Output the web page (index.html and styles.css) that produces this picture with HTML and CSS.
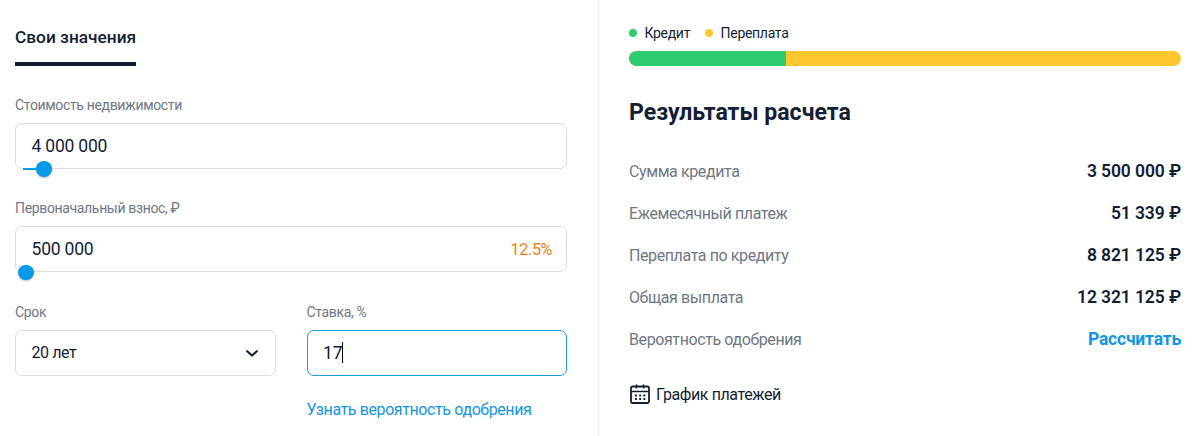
FILE: index.html
```html
<!DOCTYPE html>
<html lang="ru">
<head>
  <meta charset="utf-8">
  <title>Ипотечный калькулятор</title>
  <link rel="stylesheet" href="styles.css">
</head>
<body>
<div class="calculator">
  <div class="params">
    <div class="tabs">
      <a class="tab active">Свои значения</a>
    </div>
    <div class="field">
      <label class="label">Стоимость недвижимости</label>
      <div class="control">
        <span class="value">4 000 000</span>
        <div class="slider">
          <div class="slider-track" style="width: 21px"></div>
          <div class="slider-thumb"></div>
        </div>
      </div>
    </div>
    <div class="field">
      <label class="label">Первоначальный взнос, ₽</label>
      <div class="control">
        <span class="value">500 000</span>
        <span class="percent">12.5%</span>
        <div class="slider">
          <div class="slider-track" style="width: 3px"></div>
          <div class="slider-thumb"></div>
        </div>
      </div>
    </div>
    <div class="row">
      <div class="field">
        <label class="label">Срок</label>
        <div class="control select">
          <span class="value">20 лет</span>
          <svg class="arrow" width="14" height="10" viewBox="0 0 14 10">
            <path d="M2.2 3.2 L7 7.6 L11.8 3.2" fill="none" stroke="#131e35" stroke-width="2.1" stroke-linecap="round" stroke-linejoin="round"/>
          </svg>
        </div>
      </div>
      <div class="field">
        <label class="label">Ставка, %</label>
        <div class="control focused">
          <span class="value">17</span><span class="caret"></span>
        </div>
        <a class="link">Узнать вероятность одобрения</a>
      </div>
    </div>
  </div>
  <div class="results">
    <div class="legend">
      <span class="legend-item"><i class="dot green"></i>Кредит</span>
      <span class="legend-item"><i class="dot yellow"></i>Переплата</span>
    </div>
    <div class="bar">
      <div class="bar-credit" style="width: 28.4%"></div>
    </div>
    <h2 class="title">Результаты расчета</h2>
    <ul class="list">
      <li><span class="name">Сумма кредита</span><b class="sum">3 500 000 ₽</b></li>
      <li><span class="name">Ежемесячный платеж</span><b class="sum">51 339 ₽</b></li>
      <li><span class="name">Переплата по кредиту</span><b class="sum">8 821 125 ₽</b></li>
      <li><span class="name">Общая выплата</span><b class="sum">12 321 125 ₽</b></li>
      <li><span class="name">Вероятность одобрения</span><a class="calc">Рассчитать</a></li>
    </ul>
    <a class="schedule">
      <svg class="calendar" width="20" height="20" viewBox="0 0 20 20">
        <rect x="1" y="2.5" width="18" height="16.5" rx="1.5" fill="none" stroke="#131e35" stroke-width="1.8"/>
        <path d="M1.5 7.5 H18.5 M6.5 0.5 V4.4 M13.5 0.5 V4.4" fill="none" stroke="#131e35" stroke-width="1.6"/>
        <path d="M5 11.5 H15.6 M5 15 H15.6" fill="none" stroke="#131e35" stroke-width="1.8" stroke-dasharray="1.9 2.3"/>
      </svg>
      <span>График платежей</span>
    </a>
  </div>
</div>
</body>
</html>
```
FILE: styles.css
```css
* {
  box-sizing: border-box;
}
body {
  margin: 0;
  background-color: #fff;
  color: #131e35;
  font-family: Roboto, "Liberation Sans", sans-serif;
  font-size: 16px;
  letter-spacing: -0.4px;
}
.calculator {
  display: flex;
  height: 436px;
  overflow: hidden;
}
.params {
  width: 599px;
  padding: 24px 31px 0 15px;
  border-right: 1px solid #ececef;
}
.tabs {
  display: flex;
  height: 42px;
  margin-bottom: 29px;
}
.tab {
  font-size: 17.3px;
  font-weight: 500;
  line-height: 26px;
  letter-spacing: 0;
}
.tab.active {
  border-bottom: 4px solid #131e35;
}
.field {
  flex: 1;
  height: 103.4px;
}
.label {
  display: block;
  height: 28px;
  font-size: 14px;
  line-height: 20px;
  letter-spacing: -0.34px;
  color: #6f7785;
}
.control {
  position: relative;
  display: flex;
  align-items: center;
  height: 46px;
  padding: 0 14px 0 15.5px;
  border: 1px solid #dcdce4;
  border-radius: 7px;
}
.value {
  font-size: 17.5px;
  letter-spacing: -0.2px;
}
.percent {
  margin-left: auto;
  font-size: 16px;
  letter-spacing: -0.3px;
  color: #f0800f;
}
.slider {
  position: absolute;
  left: 7px;
  bottom: -9px;
  display: flex;
  align-items: center;
  height: 16px;
}
.slider-track {
  height: 2px;
  background-color: #069ae8;
}
.slider-thumb {
  width: 15.5px;
  height: 15.5px;
  margin-left: -8px;
  border-radius: 50%;
  background-color: #069ae8;
  box-shadow: 0 1px 2px rgba(0, 0, 0, 0.25);
}
.row {
  display: flex;
  gap: 31px;
}
.select .value {
  font-size: 16px;
  letter-spacing: -0.4px;
}
.arrow {
  margin-left: auto;
  margin-right: 2px;
}
.focused {
  border-color: #1a9fe0;
}
.caret {
  width: 1px;
  height: 21px;
  background-color: #000;
}
.link {
  display: block;
  margin-top: 24px;
  line-height: 20px;
  color: #1496e4;
  white-space: nowrap;
}
.results {
  flex: 1;
  padding: 23px 19px 0 30px;
}
.legend {
  display: flex;
  gap: 15px;
  height: 28px;
  font-size: 14px;
  line-height: 20px;
  letter-spacing: -0.3px;
}
.legend-item {
  display: flex;
  align-items: center;
  height: 20px;
}
.dot {
  width: 8px;
  height: 8px;
  margin-right: 7.5px;
  border-radius: 50%;
}
.green {
  background-color: #2ecc71;
}
.yellow {
  background-color: #ffc72f;
}
.bar {
  height: 15px;
  border-radius: 8px;
  overflow: hidden;
  background-color: #ffc72f;
}
.bar-credit {
  height: 100%;
  background-color: #2ecc71;
}
.title {
  margin: 32px 0 22px;
  font-size: 23.1px;
  font-weight: 700;
  line-height: 30px;
  letter-spacing: 0;
}
.list {
  margin: 0;
  padding: 0;
  list-style-type: none;
}
.list li {
  display: flex;
  justify-content: space-between;
  align-items: center;
  height: 42px;
}
.name {
  color: #6f7785;
}
.sum {
  font-size: 17.5px;
  font-weight: 600;
  letter-spacing: -0.1px;
}
.calc {
  font-size: 17.5px;
  font-weight: 700;
  letter-spacing: -0.2px;
  color: #1496e4;
}
.schedule {
  display: flex;
  align-items: center;
  gap: 6px;
  height: 20px;
  margin-top: 24px;
}
.calendar {
  margin-left: 1px;
}
```
